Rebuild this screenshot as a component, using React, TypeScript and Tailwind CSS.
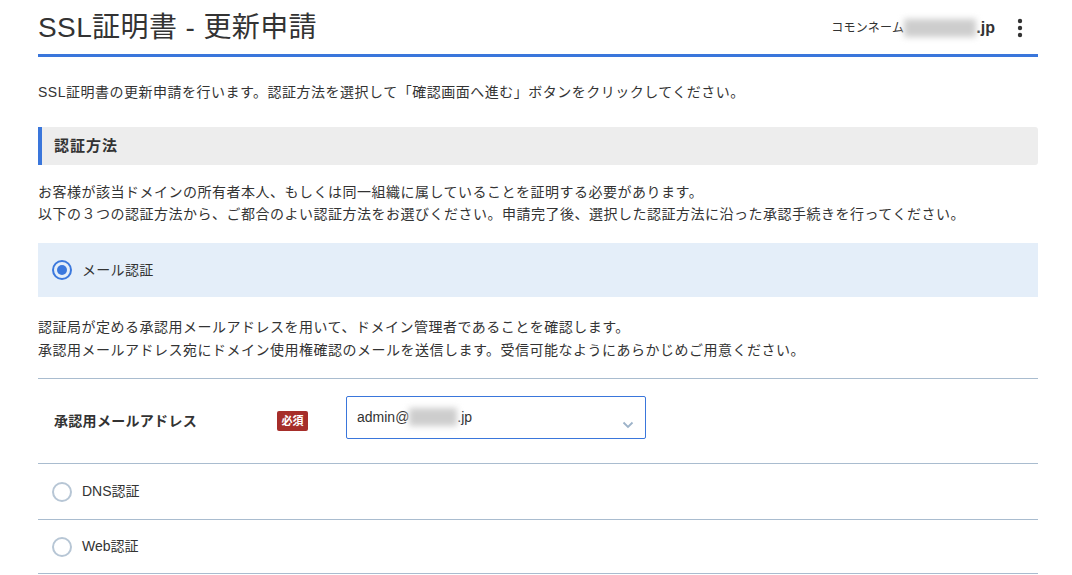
import React, { useState } from 'react';

const FONT = { fontFamily: '"Liberation Sans", Arial, "Noto Sans CJK JP", sans-serif' };

type Method = 'mail' | 'dns' | 'web';

const Radio: React.FC<{ checked: boolean }> = ({ checked }) => (
  <span
    className={
      checked
        ? 'flex h-[20px] w-[20px] items-center justify-center rounded-full border-2 border-[#3b78dd]'
        : 'flex h-[20px] w-[20px] items-center justify-center rounded-full border-2 border-[#b7c6d5]'
    }
  >
    {checked && <span className="h-[10px] w-[10px] rounded-full bg-[#3b78dd]" />}
  </span>
);

// blurred placeholder for masked domain names
const Masked: React.FC<{ w: string }> = ({ w }) => (
  <span className={`inline-block h-[18px] ${w} bg-[#cdcdcd] blur-[3px]`} />
);

export default function App() {
  const [method, setMethod] = useState<Method>('mail');

  return (
    <div className="min-h-screen bg-white text-[#333]" style={FONT}>
      <div className="ml-[38px] w-[1000px] pb-4">
        {/* Header */}
        <div className="flex items-center justify-between border-b-[3px] border-[#3a76db] pt-[8px] pb-[6px]">
          <h1 className="text-[28px] leading-[40px] tracking-[0.4px] text-[#333]">SSL証明書 - 更新申請</h1>
          <div className="flex items-center">
            <span className="text-[12px] tracking-[0.3px] text-[#333]">コモンネーム</span>
            <Masked w="w-[72px]" />
            <span className="text-[16px] font-bold text-[#333]">.jp</span>
            <button className="ml-[13px] mr-[6px] flex h-[24px] w-[24px] items-center justify-center text-[#333]">
              <svg width="6" height="20" viewBox="0 0 6 20" fill="currentColor">
                <circle cx="3" cy="3" r="2.2" />
                <circle cx="3" cy="10" r="2.2" />
                <circle cx="3" cy="17" r="2.2" />
              </svg>
            </button>
          </div>
        </div>

        <p className="mt-[24px] text-[14px] leading-[22px] tracking-[0.5px]">
          SSL証明書の更新申請を行います。認証方法を選択して「確認画面へ進む」ボタンをクリックしてください。
        </p>

        {/* Section: 認証方法 */}
        <div className="mt-[24px] flex h-[38px] items-center rounded-r-[3px] border-l-4 border-[#3a76db] bg-[#ededed] pl-[12px]">
          <h2 className="text-[15px] font-bold tracking-[1px] text-[#333]">認証方法</h2>
        </div>

        <div className="mt-[16px] text-[14px] leading-[22px] tracking-[0.5px]">
          <p>お客様が該当ドメインの所有者本人、もしくは同一組織に属していることを証明する必要があります。</p>
          <p>以下の３つの認証方法から、ご都合のよい認証方法をお選びください。申請完了後、選択した認証方法に沿った承認手続きを行ってください。</p>
        </div>

        <button
          onClick={() => setMethod('mail')}
          className={
            method === 'mail'
              ? 'mt-[18px] flex h-[54px] w-full items-center gap-[10px] bg-[#e4eef9] pl-[14px] text-left'
              : 'mt-[18px] flex h-[54px] w-full items-center gap-[10px] pl-[14px] text-left'
          }
        >
          <Radio checked={method === 'mail'} />
          <span className="text-[14px] tracking-[0.3px]">メール認証</span>
        </button>

        <div className="mt-[19px] text-[14px] leading-[23px] tracking-[0.5px]">
          <p>認証局が定める承認用メールアドレスを用いて、ドメイン管理者であることを確認します。</p>
          <p>承認用メールアドレス宛にドメイン使用権確認のメールを送信します。受信可能なようにあらかじめご用意ください。</p>
        </div>

        {/* Approval address row */}
        <div className="mt-[16px] flex h-[85px] items-center border-t border-[#a9bccf]">
          <div className="w-[239px] pl-[16px] text-[14px] font-bold tracking-[0.3px]">承認用メールアドレス</div>
          <span className="flex h-[20px] w-[31px] items-center justify-center rounded-[2px] bg-[#a62e2a] text-[11px] font-bold text-white">
            必須
          </span>
          <div className="ml-[38px] mb-[8px] flex h-[43px] w-[300px] items-start justify-between rounded-[2px] border border-[#3a76db] px-[10px] pt-[10px]">
            <span className="flex items-center text-[14px]">
              admin@
              <Masked w="w-[48px]" />
              .jp
            </span>
            <svg className="mt-[14px] mr-[1px]" width="12" height="8" viewBox="0 0 12 8" fill="none" stroke="#9db3c9" strokeWidth="1.8">
              <path d="M1.5 1.5 L6 6 L10.5 1.5" />
            </svg>
          </div>
        </div>

        <button
          onClick={() => setMethod('dns')}
          className="flex h-[56px] w-full items-center gap-[10px] border-t border-[#a9bccf] pl-[14px] text-left"
        >
          <Radio checked={method === 'dns'} />
          <span className="text-[14px]">DNS認証</span>
        </button>
        <button
          onClick={() => setMethod('web')}
          className="flex h-[55px] w-full items-center gap-[10px] border-y border-[#a9bccf] pl-[14px] text-left"
        >
          <Radio checked={method === 'web'} />
          <span className="text-[14px]">Web認証</span>
        </button>
      </div>
    </div>
  );
}
